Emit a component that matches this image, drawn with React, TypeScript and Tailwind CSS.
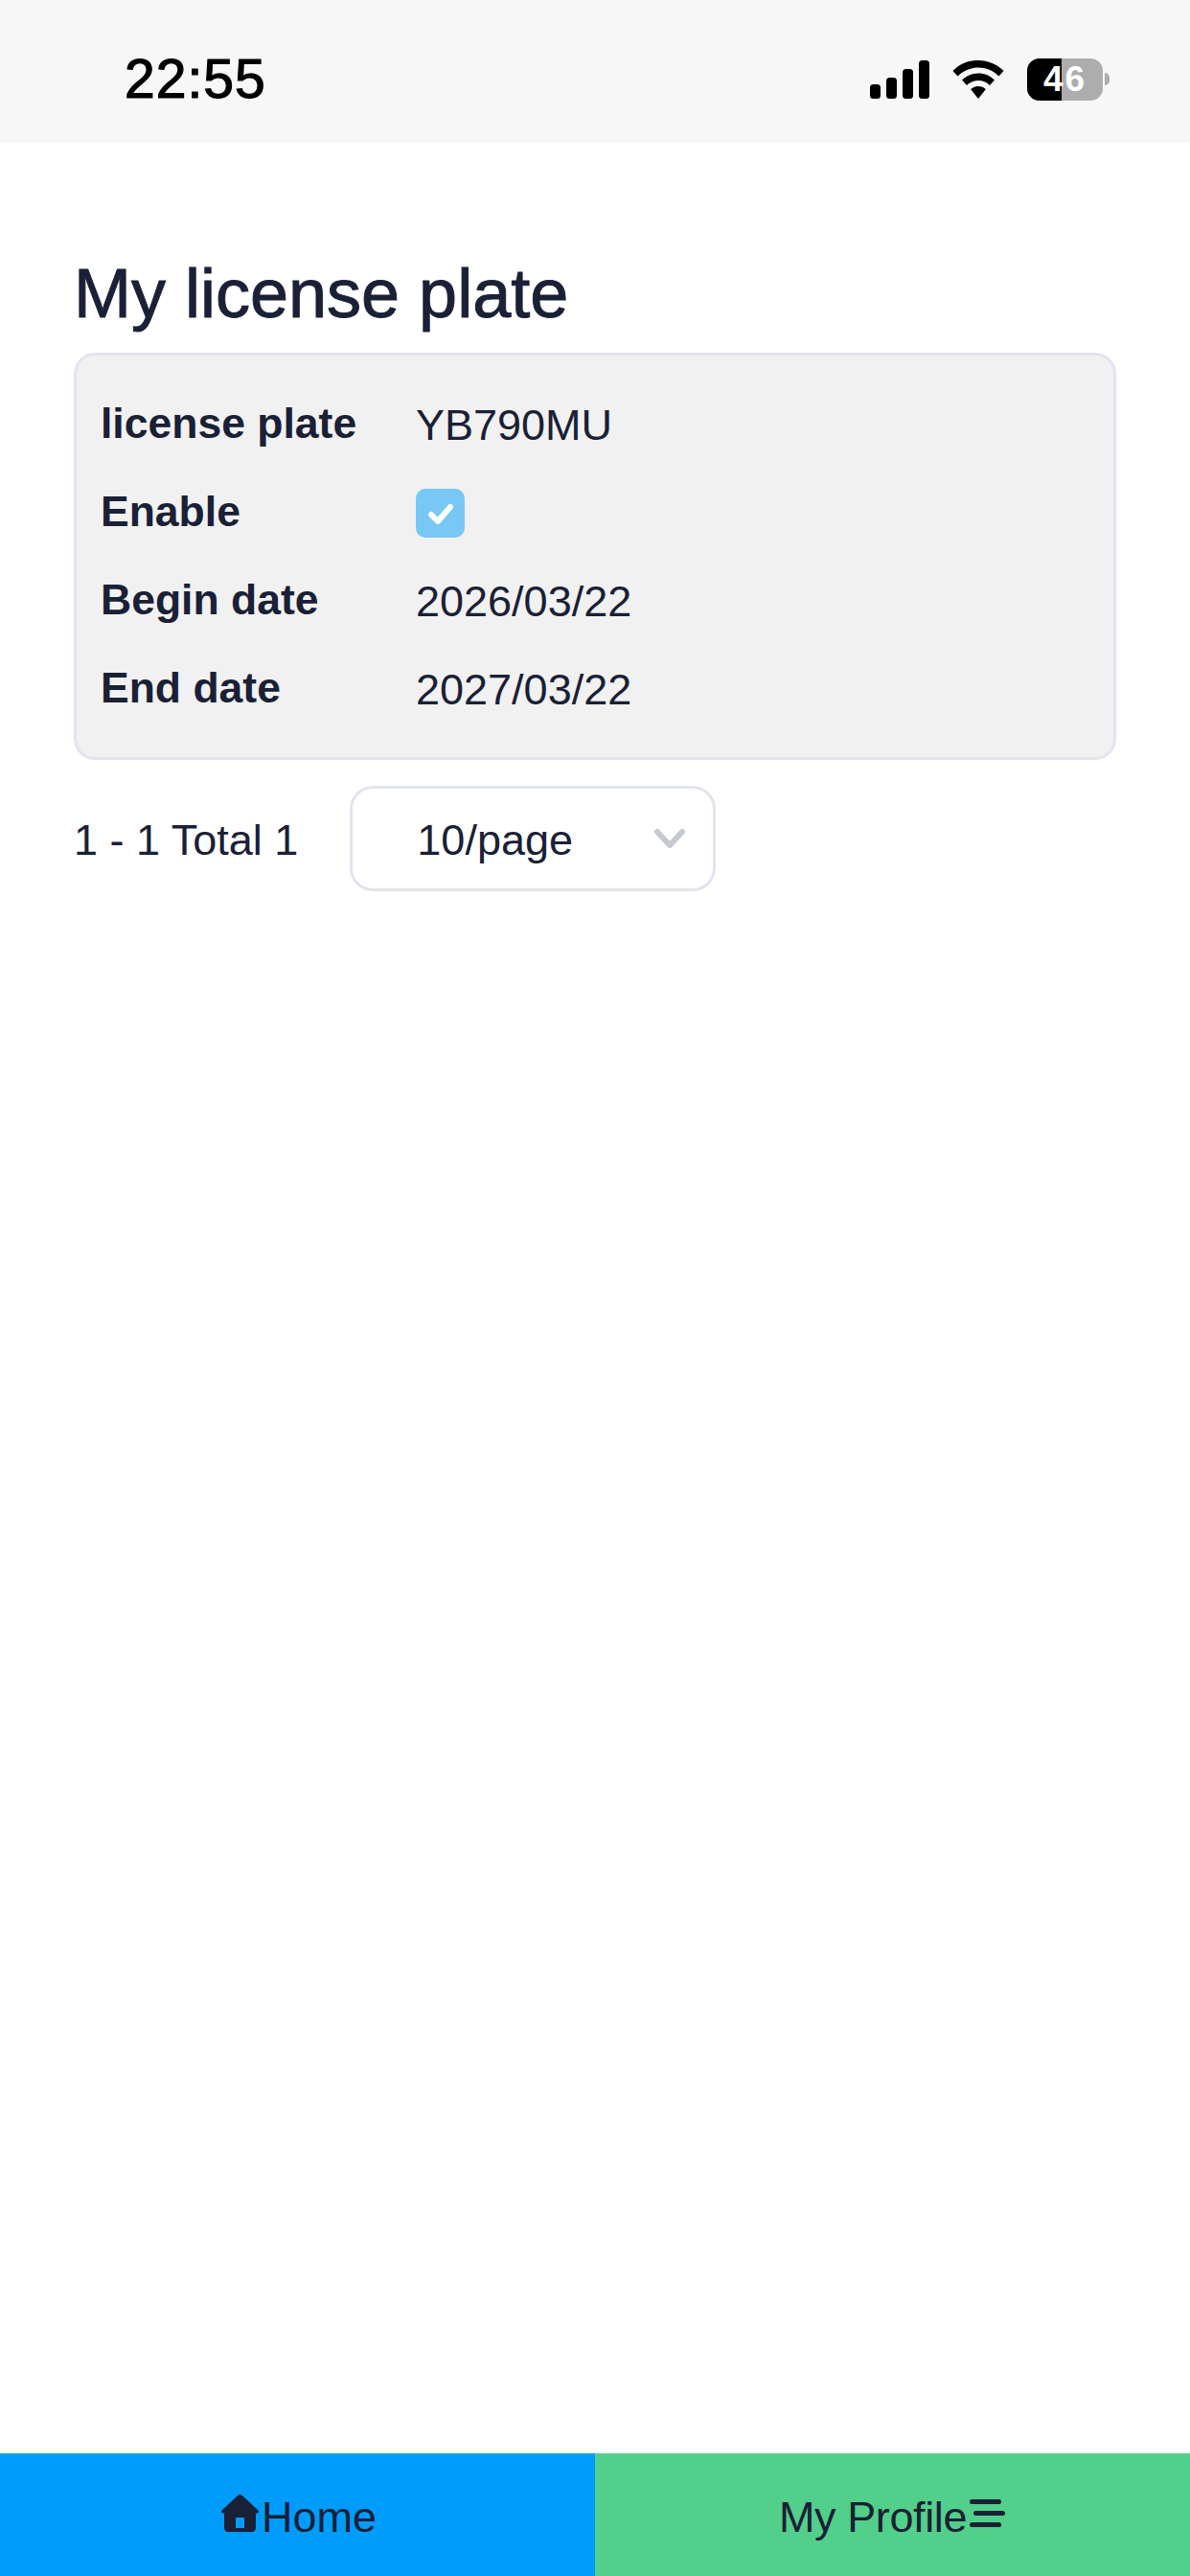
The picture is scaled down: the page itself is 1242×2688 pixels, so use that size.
export default function App() {
  const rows = [
    { label: 'license plate', value: 'YB790MU' },
    { label: 'Enable', value: null },
    { label: 'Begin date', value: '2026/03/22' },
    { label: 'End date', value: '2027/03/22' },
  ];

  return (
    <div className="flex h-[2688px] w-[1242px] flex-col overflow-hidden bg-white font-['Liberation_Sans',Arial,sans-serif] text-[#1a2035]">
      <div className="flex h-[149px] shrink-0 items-center justify-between bg-[#f7f7f7] pl-[130px] pr-[84px] pt-[16px]">
        <span className="text-[57px] leading-none tracking-[1px] text-black [-webkit-text-stroke:1.2px_#000]">22:55</span>
        <div className="flex items-center gap-[24px]">
          <svg width="62" height="40" viewBox="0 0 62 40" fill="#000">
            <rect x="0" y="25" width="11" height="15" rx="3.5" />
            <rect x="17" y="18" width="11" height="22" rx="3.5" />
            <rect x="34" y="9" width="11" height="31" rx="3.5" />
            <rect x="51" y="0" width="11" height="40" rx="3.5" />
          </svg>
          <svg width="54" height="40" viewBox="0 0 54 40" fill="#000">
            <path d="M27 0C16.5 0 7.500 4 0.500 11l5 5.500C11.500 10.500 19 7.500 27 7.500s15.500 3 21.500 9l5-5.500C46.500 4 37.500 0 27 0z" />
            <path d="M27 13.500c-6.500 0-12.500 2.500-17 7l5 5.500c3.200-3.200 7.500-5 12-5s8.800 1.800 12 5l5-5.500c-4.500-4.500-10.500-7-17-7z" />
            <path d="M27 27c-3 0-5.800 1.200-7.800 3.200L27 40l7.800-9.800C32.800 28.200 30 27 27 27z" />
          </svg>
          <div className="flex items-center gap-[2px]">
            <div className="relative flex h-[44px] w-[79px] overflow-hidden rounded-[13px] bg-[#adadad]">
              <div className="h-full w-[36px] bg-black" />
              <span className="absolute inset-0 flex items-center justify-center text-[37px] font-bold leading-none tracking-[2px] text-white">46</span>
            </div>
            <div className="h-[13px] w-[5px] rounded-r-full bg-[#adadad]" />
          </div>
        </div>
      </div>

      <main className="flex flex-col px-[77px] pt-[119px]">
        <h1 className="text-[72px] font-normal leading-[76px] [-webkit-text-stroke:1px_#1a2035]">My license plate</h1>
        <div className="mt-[24px] flex flex-col gap-[32px] rounded-[22px] border-[3px] border-[#e2e4ef] bg-[#f1f1f1] pb-[42px] pl-[25px] pr-[26px] pt-[41px]">
          {rows.map(row => (
            <div key={row.label} className="flex h-[60px] items-center">
              <span className="w-[329px] shrink-0 text-[44.5px] font-bold leading-none">{row.label}</span>
              {row.value ? (
                <span className="pt-[3px] text-[45px] leading-none">{row.value}</span>
              ) : (
                <span className="mt-[3px] flex h-[51px] w-[51px] items-center justify-center rounded-[10px] bg-[#78c7f5]">
                  <svg width="28" height="24" viewBox="0 0 28 24" fill="none" stroke="#fff" strokeWidth="6" strokeLinecap="round" strokeLinejoin="round">
                    <path d="M4 13l7 7L24 5" />
                  </svg>
                </span>
              )}
            </div>
          ))}
        </div>
        <div className="mt-[27px] flex items-center gap-[54px]">
          <span className="pt-[3px] text-[45px] leading-none">1 - 1 Total 1</span>
          <div className="flex h-[110px] w-[382px] items-center justify-between rounded-[24px] border-[3px] border-[#e2e4ef] pl-[67px] pr-[28px]">
            <span className="pt-[3px] text-[45px] leading-none">10/page</span>
            <svg width="34" height="22" viewBox="0 0 34 22" fill="none" stroke="#c6c9d2" strokeWidth="6" strokeLinecap="round" strokeLinejoin="round">
              <path d="M4 4l13 14L30 4" />
            </svg>
          </div>
        </div>
      </main>

      <nav className="mt-auto flex h-[128px] shrink-0 text-[45px]">
        <div className="flex w-1/2 items-center justify-center gap-[3px] bg-[#009cfb] pl-[3px] pt-[5px]">
          <svg className="mb-[8px]" width="39" height="39" viewBox="0 0 39 39" fill="#1a2035">
            <path d="M19.500 0c-.9 0-1.700.4-2.300 1L.6 16.500C-.6 17.700.2 19.500 1.800 19.500H3V35c0 2.200 1.800 4 4 4h25c2.200 0 4-1.800 4-4V19.500h1.200c1.600 0 2.400-1.800 1.200-3L21.800 1c-.6-.6-1.400-1-2.300-1zM16 24h7c.6 0 1 .4 1 1v10H15V25c0-.6.4-1 1-1z" fillRule="evenodd" />
          </svg>
          <span className="leading-none">Home</span>
        </div>
        <div className="flex w-1/2 items-center justify-center gap-[2px] bg-[#52cf8a] pr-[1px] pt-[5px]">
          <span className="leading-none tracking-[-0.4px]">My Profile</span>
          <svg className="mb-[8px]" width="38" height="29" viewBox="0 0 38 29" fill="#1a2035">
            <rect x="1" y="0" width="33" height="5" rx="2.5" />
            <rect x="5" y="12" width="33" height="5" rx="2.5" />
            <rect x="1" y="24" width="33" height="5" rx="2.5" />
          </svg>
        </div>
      </nav>
    </div>
  );
}
